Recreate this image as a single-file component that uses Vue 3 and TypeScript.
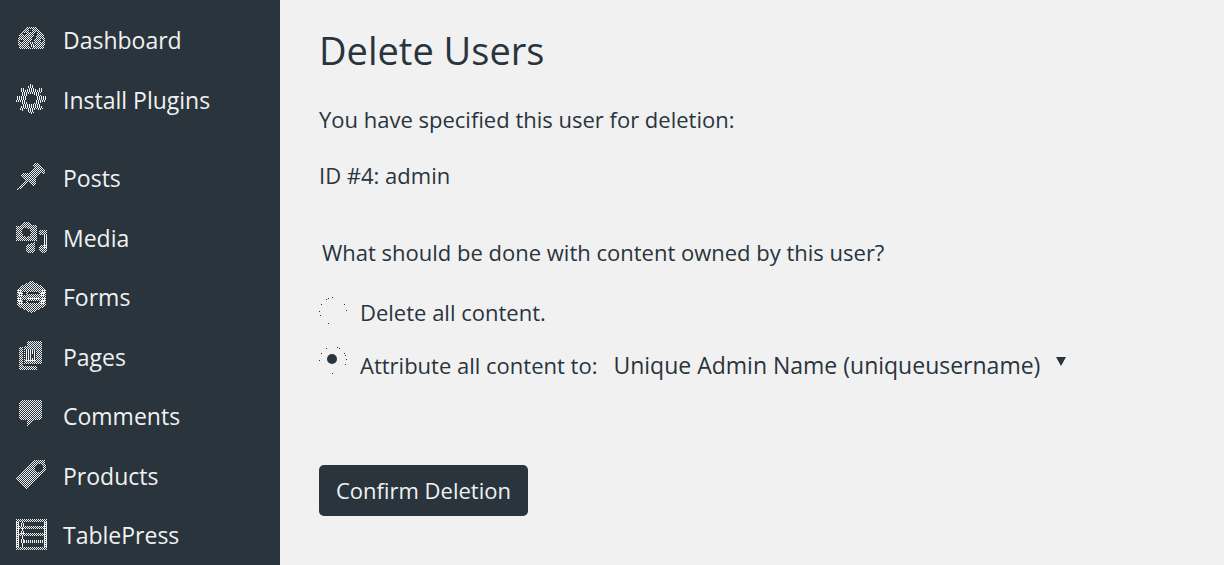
<script setup lang="ts">
import { ref } from 'vue'

interface MenuItem {
  label: string
  icon: string
}

const primary: MenuItem[] = [
  { label: 'Dashboard', icon: 'dashboard' },
  { label: 'Install Plugins', icon: 'gear' },
]

const secondary: MenuItem[] = [
  { label: 'Posts', icon: 'pin' },
  { label: 'Media', icon: 'media' },
  { label: 'Forms', icon: 'forms' },
  { label: 'Pages', icon: 'pages' },
  { label: 'Comments', icon: 'comment' },
  { label: 'Products', icon: 'tag' },
  { label: 'TablePress', icon: 'table' },
]

const groups = [
  { name: 'primary', items: primary },
  { name: 'secondary', items: secondary },
]

const choice = ref<'delete' | 'reassign'>('reassign')
const owner = ref('uniqueusername')
</script>

<template>
  <div class="layout">
    <svg class="defs" aria-hidden="true">
      <defs>
        <pattern id="dither" width="2" height="8" patternUnits="userSpaceOnUse">
          <rect class="px" x="0" y="0" width="1" height="4" />
          <rect class="px" x="1" y="4" width="1" height="4" />
        </pattern>
        <pattern id="checker" width="2" height="2" patternUnits="userSpaceOnUse">
          <rect class="px" x="0" y="0" width="1" height="1" />
          <rect class="px" x="1" y="1" width="1" height="1" />
        </pattern>
        <pattern id="stripes" width="2" height="2" patternUnits="userSpaceOnUse">
          <rect class="px" x="0" y="0" width="1" height="2" />
        </pattern>
      </defs>
    </svg>

    <nav class="sidebar" aria-label="Main menu">
      <ul v-for="group in groups" :key="group.name" class="group" :class="group.name">
        <li v-for="item in group.items" :key="item.label">
          <a href="#" class="item">
            <svg class="icon" viewBox="0 0 32 32" aria-hidden="true">
              <g v-if="item.icon === 'dashboard'">
                <path class="fine" d="M4 25C0 18 2 10 7 6A13 13 0 0 1 24 6C30 11 31 18 27 25Z" />
                <path class="cut" d="M7 9H10V11H7ZM13 5H16V8H13ZM4 16H7V18H4ZM25 15H27V18H25Z" />
                <path class="cut" d="M20 7L22 8 18 17C20 22 18 24 15 24C12 23 12 19 15 17Z" />
                <path class="coarse" d="M14 18H18V23H14Z" />
              </g>
              <g v-else-if="item.icon === 'gear'">
                <path
                  class="coarse"
                  fill-rule="evenodd"
                  d="M14 0H16L18 3V5L21 6 23 4H26V7L24 9 25 12H30V18H25L24 21 27 24 26 27 23 26 21 25 18 26V28L16 30H14L12 28V26L9 25 6 27 3 25 6 21 5 18H0V12H5L6 9 4 7V4H7L9 6 12 5V3ZM15 9.500A5.500 5.500 0 1 0 15 20.500A5.500 5.500 0 1 0 15 9.500Z"
                />
              </g>
              <g v-else-if="item.icon === 'pin'">
                <path
                  class="fine"
                  d="M17 2L19 0 23 2 28 7 30 11 28 12 25 11 20 17 20 21 17 24 12 20 4 27 0 30 2 25 9 18 5 13 7 11 12 11 18 5Z"
                />
              </g>
              <g v-else-if="item.icon === 'media'">
                <path
                  class="fine"
                  fill-rule="evenodd"
                  d="M0 4H5L7 0H14L16 3H21V19H0ZM10.500 6A4.500 4.500 0 1 0 10.500 15A4.500 4.500 0 1 0 10.500 6Z"
                />
                <path class="fine" d="M23 8H31V13H23ZM31 23V28A4 4 0 1 1 28 23Z" />
                <path class="stripes" d="M28 12H31V26H28Z" />
                <path class="fine" d="M19 20V27A4.500 4.500 0 1 1 14 22Z" />
              </g>
              <g v-else-if="item.icon === 'forms'">
                <path class="fine" d="M13 1Q15.500 -1 18 1L28 6Q30 8 30 10V22Q30 24 28 26L18 31Q15.500 33 13 31L3 26Q1 24 1 22V10Q1 8 3 6Z" />
                <path class="cut" d="M12 11H23V13H12ZM12 20H23V22H12ZM7 11H10V14H7ZM7 19H10V22H7Z" />
                <path class="coarse" d="M12 15H24V18H12ZM2 9H6V23H2ZM25 9H29V23H25Z" />
              </g>
              <g v-else-if="item.icon === 'pages'">
                <path class="fine" d="M8 5H11V0H26V23H8Z" />
                <path class="cut" d="M9 8H20V18H9Z" />
                <path class="stripes" d="M9 8H20V20H9Z" />
                <path class="cut" d="M8 1H10V4H8ZM16 13H17V17H16ZM19 14H20V17H19Z" />
                <path class="fine" d="M3 6H7V25H21V29H3Z" />
              </g>
              <g v-else-if="item.icon === 'comment'">
                <path class="fine" d="M5 0H24L26 2V18L24 20H18L11 28V20H5L3 18V2Z" />
              </g>
              <g v-else-if="item.icon === 'tag'">
                <path
                  class="fine"
                  fill-rule="evenodd"
                  d="M18 0H29L30 10 11 30 0 18ZM23 4A4 4 0 1 0 23 12A4 4 0 1 0 23 4Z"
                />
              </g>
              <g v-else>
                <path class="fine" fill-rule="evenodd" d="M0 0H31V31H0ZM3 3V28H28V3Z" />
                <path class="fine" d="M3 7H28V10H3ZM3 14H28V17H3Z" />
                <path class="stripes" d="M0 3H3V28H0ZM28 3H31V28H28ZM8 21H28V24H8Z" />
                <path class="coarse" d="M5 3H8V28H5Z" />
              </g>
            </svg>
            <span>{{ item.label }}</span>
          </a>
        </li>
      </ul>
    </nav>

    <main class="content">
      <h1>Delete Users</h1>
      <p class="intro">You have specified this user for deletion:</p>
      <p class="target">ID #4: admin</p>

      <form @submit.prevent>
        <fieldset>
          <legend>What should be done with content owned by this user?</legend>
          <div class="option">
            <input id="opt-delete" v-model="choice" type="radio" name="choice" value="delete" class="radio plain" />
            <label for="opt-delete">Delete all content.</label>
          </div>
          <div class="option reassign">
            <input id="opt-reassign" v-model="choice" type="radio" name="choice" value="reassign" class="radio ringed" />
            <label for="opt-reassign">Attribute all content to:</label>
            <span class="picker">
              <select v-model="owner" aria-label="New owner">
                <option value="uniqueusername">Unique Admin Name (uniqueusername)</option>
              </select>
              <svg class="arrow" viewBox="0 0 10 9" aria-hidden="true"><path d="M0 0H10L5 9Z" /></svg>
            </span>
          </div>
        </fieldset>
        <button type="submit">Confirm Deletion</button>
      </form>
    </main>
  </div>
</template>

<style>
body {
  background: #f1f1f1;
}
</style>

<style scoped>
.layout {
  --ink: #29343d;
  --paper: #f1f1f1;
  display: flex;
  min-height: 100vh;
  color: var(--ink);
  background: var(--paper);
  font-family: "Open Sans", "Noto Sans", sans-serif;
  font-size: 22px;
  line-height: 32px;
}

.defs {
  position: absolute;
  width: 0;
  height: 0;
}

.px {
  fill: #f1f1f1;
  shape-rendering: crispEdges;
}

.sidebar {
  display: flex;
  flex: none;
  flex-direction: column;
  gap: 18px;
  box-sizing: border-box;
  width: 280px;
  padding-top: 10px;
  background: var(--ink);
}

.group {
  margin: 0;
  padding: 0;
  list-style: none;
}

.item {
  display: flex;
  align-items: center;
  gap: 15px;
  padding: 14px 0 14px 16px;
  color: var(--paper);
  font-size: 23px;
  text-decoration: none;
}

.secondary li:nth-child(even) .item {
  padding-bottom: 13px;
}

.secondary li:last-child .item {
  padding-bottom: 0;
}

.icon {
  flex: none;
  width: 32px;
  height: 32px;
  overflow: visible;
  shape-rendering: crispEdges;
}

.fine {
  fill: url(#checker);
}

.coarse {
  fill: url(#dither);
}

.stripes {
  fill: url(#stripes);
}

.cut {
  fill: var(--ink);
}

.content {
  flex: 1;
  min-width: 0;
  padding: 24px 39px;
}

h1 {
  margin: 0 0 27px;
  font-size: 38px;
  font-weight: 400;
  line-height: 52px;
}

p {
  margin: 0 0 24px;
}

.target {
  margin-bottom: 45px;
}

fieldset {
  display: grid;
  gap: 17px;
  margin: 0;
  padding: 0;
  border: 0;
}

legend {
  margin-bottom: 28px;
  padding: 0 0 0 3px;
}

.option {
  display: flex;
  align-items: flex-start;
  white-space: nowrap;
}

.reassign label,
.picker {
  margin-top: 4px;
}

.radio {
  position: relative;
  flex: none;
  width: 28px;
  height: 28px;
  margin: 1px 13px 0 0;
  appearance: none;
}

.radio::before {
  position: absolute;
  top: 0;
  left: 0;
  width: 1px;
  height: 1px;
  color: var(--ink);
  content: "";
}

.plain::before {
  box-shadow: 0 14px, 1px 18px, 2px 7px, 7px 2px, 9px 1px, 13px 0, 25px 7px, 27px 13px, 9px 26px;
}

.ringed::before {
  box-shadow: 0 14px, 2px 7px, 7px 2px, 18px 1px, 20px 2px, 25px 7px, 26px 9px, 27px 13px, 26px 18px, 13px 27px;
}

.radio:checked::after {
  position: absolute;
  top: 8px;
  left: 8px;
  width: 10px;
  height: 10px;
  border-radius: 50%;
  background: var(--ink);
  content: "";
}

.picker {
  position: relative;
  margin-left: 16px;
}

select {
  display: block;
  height: 32px;
  padding: 0 26px 0 0;
  border: 0;
  color: inherit;
  background: transparent;
  font: inherit;
  font-size: 23px;
  appearance: none;
}

.arrow {
  position: absolute;
  top: 8px;
  right: 0;
  width: 10px;
  height: 9px;
  fill: var(--ink);
  pointer-events: none;
}

button {
  margin-top: 84px;
  padding: 9px 17px 10px;
  border: 0;
  border-radius: 5px;
  color: var(--paper);
  background: var(--ink);
  font: inherit;
  font-weight: 500;
}
</style>
